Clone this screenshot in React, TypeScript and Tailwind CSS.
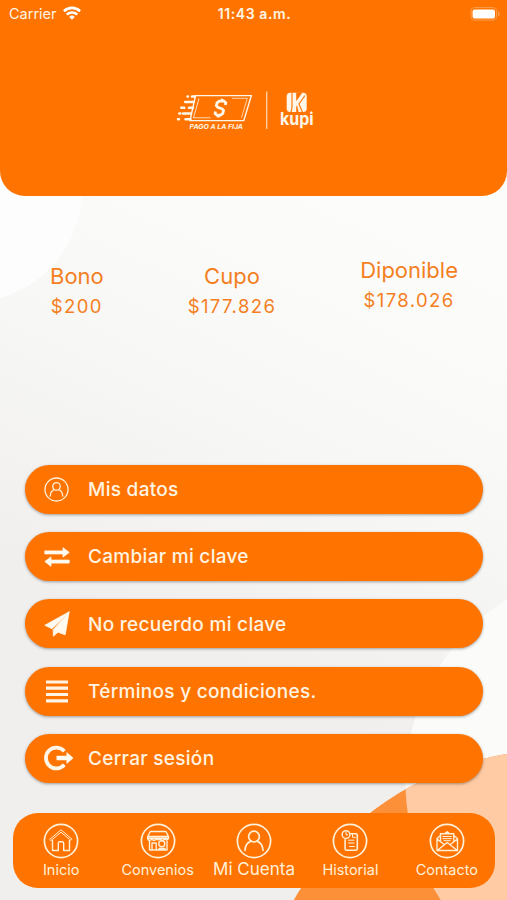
import React from 'react'

const balances = [
  { label: 'Bono', value: '$200', raised: false },
  { label: 'Cupo', value: '$177.826', raised: false },
  { label: 'Diponible', value: '$178.026', raised: true }
]

function Background() {
  return (
    <svg className="absolute inset-0" width="507" height="900" viewBox="0 0 507 900">
      <defs>
        <linearGradient id="bg" gradientUnits="userSpaceOnUse" x1="360" y1="220" x2="160" y2="640">
          <stop offset="0" stopColor="#fcfcfb" />
          <stop offset="0.5" stopColor="#f7f7f5" />
          <stop offset="0.85" stopColor="#f2f1f0" />
          <stop offset="1" stopColor="#f0efee" />
        </linearGradient>
        <clipPath id="bubble">
          <circle cx="620.5" cy="782" r="215" />
        </clipPath>
      </defs>
      <rect width="507" height="900" fill="url(#bg)" />
      <circle cx="-30" cy="190" r="112" fill="#fdfdfd" />
      <circle cx="620.5" cy="782" r="215" fill="#fbfbfa" />
      <circle cx="553" cy="1050" r="299.5" fill="#fc9039" />
      <circle cx="553" cy="1050" r="299.5" fill="#ffcba4" clipPath="url(#bubble)" />
    </svg>
  )
}

function StatusBar() {
  return (
    <div className="grid grid-cols-3 items-center h-7 pl-[9px] pr-[7px] text-[#fff4e6]">
      <div className="flex items-center gap-[6px]">
        <span className="text-[14.5px]">Carrier</span>
        <svg width="18" height="14" viewBox="0 0 18 14" fill="none" stroke="white" strokeWidth="2.7" className="-mt-[2px]">
          <path d="M.9 5.2a11.6 11.6 0 0 1 16.2 0" />
          <path d="M3.8 8.6a7.5 7.5 0 0 1 10.4 0" />
          <path d="M9 13.7 6.2 10.9a4 4 0 0 1 5.6 0Z" fill="white" stroke="none" />
        </svg>
      </div>
      <div className="-mt-[1px] text-center text-[14px] font-semibold tracking-[0.6px] whitespace-nowrap">11:43 a.m.</div>
      <div className="flex justify-end -mt-[1px]">
        <svg width="30" height="14" viewBox="0 0 30 14">
          <rect x="1.1" y="0.6" width="25.5" height="12.4" rx="3.5" fill="none" stroke="#ff9f50" strokeWidth="1" />
          <rect x="2.6" y="2.4" width="22.4" height="9" rx="2" fill="white" />
          <path d="M28 4.6v4.6c1.2-.4 1.7-1.2 1.7-2.3S29.2 5 28 4.6Z" fill="#ff9f50" />
        </svg>
      </div>
    </div>
  )
}

function Logo() {
  return (
    <svg width="150" height="50" viewBox="175 90 150 50" fill="none" stroke="#fff6ea" className="overflow-visible">
      <path d="M195.5 95.6H251.3L243.8 120.6H190Z" strokeWidth="1.4" />
      <path d="M232 98.3H247.3L241.5 117.6" strokeWidth="0.7" />
      <path d="M210.5 117.8H193.5L199 98.5" strokeWidth="0.8" />
      <path d="M192 96.5h3M185.2 102h8.5M189 107.8h4M183 113.6h8M185.5 119.2h5" strokeWidth="2.5" strokeLinecap="round" />
      <path d="M187.5 96.5h.5M181.3 107.8h3M179.3 113.6h1M178 119.2h1" strokeWidth="2.5" strokeLinecap="round" />
      <path d="M225.3 105l.5-2.3-1.8-1.6h-4.7l-2.3 1.8-.6 2.8 1.4 1.7 4.4 1.5 1.3 1.5-.7 3-2.2 1.8h-3.7l-1.8-1.6.4-2M222.4 98.8l-.6 2.2M218.6 115.3l-.5 2.2" strokeWidth="2.8" />
      <text x="189.5" y="128.6" fill="#fff6ea" stroke="none" textLength="53.5" lengthAdjust="spacingAndGlyphs" className="font-['Inter'] text-[6.5px] font-bold italic">
        PAGO A LA FIJA
      </text>
      <path d="M266.7 91.5v37.5" strokeWidth="1.3" stroke="#ffd2a6" />
      <rect x="286.7" y="92.8" width="20" height="19.2" rx="3.5" fill="#fff6ea" stroke="none" />
      <path d="M290.8 112.5 292 108V92.5M302.6 112.5l-3.6-8.5 6-8.5" stroke="#ff7400" strokeWidth="1.1" />
      <path d="M296.2 92.5h6.3l-6.3 8.7ZM296.2 106.5v6h2.6l-1.7-7Z" fill="#ff7400" stroke="none" />
      <text x="280" y="124.8" fill="#fff6ea" stroke="none" textLength="33.5" lengthAdjust="spacingAndGlyphs" className="font-['Inter'] text-[17px] font-bold">
        kupi
      </text>
    </svg>
  )
}

function PersonIcon({ size, stroke }: { size: number; stroke: number }) {
  return (
    <svg width={size} height={size} viewBox="0 0 36 36" fill="none" stroke="#fff0d9" strokeWidth={stroke} strokeLinecap="round">
      <circle cx="18" cy="18" r="16.6" />
      <circle cx="18" cy="13.6" r="5.4" />
      <path d="M9 27.5c.2-5.3 2.8-8.3 6-9.3M27 27.5c-.2-5.3-2.8-8.3-6-9.3" />
    </svg>
  )
}

const menu = [
  { label: 'Mis datos', icon: <PersonIcon size={25} stroke={1.9} /> },
  {
    label: 'Cambiar mi clave',
    icon: (
      <svg width="26" height="20" viewBox="0 0 26 20" fill="#fff9f0" stroke="#fff9f0" strokeWidth="0.8" strokeLinejoin="round">
        <path d="M.8 3.9H19V.7L25.2 5.4 19 10.1V6.9H.8ZM25.2 13.1H7V9.9L.8 14.6 7 19.3V16.1h18.2Z" />
      </svg>
    )
  },
  {
    label: 'No recuerdo mi clave',
    icon: (
      <svg width="26" height="26" viewBox="0 0 26 26" fill="#fff9f0" stroke="#fff9f0" strokeWidth="0.8" strokeLinejoin="round">
        <path d="M25.2.8.8 14.3l7.2 3.4ZM25.2.8 9.2 18.700l.2 6.500 4.500-4 7.300 2.600Z" />
      </svg>
    )
  },
  {
    label: 'Términos y condiciones.',
    icon: (
      <svg width="22" height="23" viewBox="0 0 22 23" stroke="#fff4e6" strokeWidth="3.2">
        <path d="M0 2h22M0 8.2h22M0 14.5h22M0 20.8h22" />
      </svg>
    )
  },
  {
    label: 'Cerrar sesión',
    icon: (
      <svg width="30" height="26" viewBox="0 0 30 26" fill="none" className="shrink-0 ml-1">
        <path d="M20.3 6.3A10.4 10.4 0 1 0 20.3 19.7" stroke="#fff6ea" strokeWidth="3.8" />
        <path d="M12.5 10.8H22.5V7L29.5 13 22.5 19V15.2H12.5Z" fill="#fff9f0" />
      </svg>
    )
  }
]

function NavIcon({ children }: { children: React.ReactNode }) {
  return (
    <svg width="36" height="36" viewBox="0 0 36 36" fill="none" stroke="#fff0d9" strokeWidth="1.4" strokeLinejoin="round" strokeLinecap="round">
      <circle cx="18" cy="18" r="16.6" strokeWidth="1.7" />
      {children}
    </svg>
  )
}

const tabs = [
  {
    label: 'Inicio',
    icon: (
      <NavIcon>
        <path d="M7 16.2 18 6.8l11 9.4-1.2 1.2L18 9.2l-9.8 8.2Z" strokeWidth="1" />
        <path d="M9.5 17.5v10h5.8v-7.3q0-1.5 1.5-1.5h2.4q1.5 0 1.5 1.5v7.3h5.8v-10" />
      </NavIcon>
    )
  },
  {
    label: 'Convenios',
    icon: (
      <NavIcon>
        <path d="M10.3 8.5h15.6l2.6 5v1.7H7.7v-1.7ZM7.7 13.5h20.8" />
        <path d="M7.7 15.2a2.1 2.1 0 0 0 4.2 0 2.1 2.1 0 0 0 4.2 0 2.1 2.1 0 0 0 4.1 0 2.1 2.1 0 0 0 4.2 0 2.1 2.1 0 0 0 4.1 0" />
        <path d="M9.5 18v9h17.5v-9M12 27v-7h4.2v7M19 27v-1.5h6" />
        <circle cx="21.8" cy="20.8" r="3" />
      </NavIcon>
    )
  },
  { label: 'Mi Cuenta', active: true, icon: <PersonIcon size={36} stroke={1.7} /> },
  {
    label: 'Historial',
    icon: (
      <NavIcon>
        <circle cx="14" cy="11.6" r="3.9" />
        <path d="M14 9.2v2.6h1.8" strokeWidth="1" />
        <path d="M18.8 10.8h5q1.5 0 1.5 1.5v13.4q0 1.5-1.5 1.5h-9.2q-1.5 0-1.5-1.5v-9" strokeWidth="1.6" />
        <path d="M20.5 11.5v2.8h3M16.5 17.2h5.5M16.5 20h5.5M17.5 23.5h5" strokeWidth="1" />
      </NavIcon>
    )
  },
  {
    label: 'Contacto',
    icon: (
      <NavIcon>
        <path d="M8 15.5v12h20.5v-12l-3.5-2.8M8 15.5l3.3-2.8M8 16l7.3 5.5M28.5 16l-7.3 5.5M8.5 27.2l9.7-7.7 9.8 7.7" />
        <path d="M11.5 18.5v-7.8h13.3v7.8M15.5 10.7l2.6-2 2.8 2" />
        <path d="M13.8 13.5h8.6M13.8 15.6h8.6M15 17.7h6.2" strokeWidth="1" />
      </NavIcon>
    )
  }
]

export default function App() {
  return (
    <div className="relative w-[507px] h-[900px] overflow-hidden bg-[#f4f3f2] font-['Inter',sans-serif]">
      <Background />
      <div className="relative flex flex-col h-full">
        <header className="h-[196px] shrink-0 rounded-b-[25px] bg-[#ff7400]">
          <StatusBar />
          <div className="flex pl-[175px] pt-[62px]">
            <Logo />
          </div>
        </header>

        <section className="flex justify-between h-[269px] shrink-0 pl-[50px] pr-[49px] pt-[63px] text-[#f47f1f]">
          {balances.map(b => (
            <div key={b.label} className={b.raised ? 'text-center' : 'text-center pt-[6px]'}>
              <div className="text-[22px] leading-[22px]">{b.label}</div>
              <div className="mt-[9px] text-[18.5px] leading-[20px] tracking-[1.4px]">{b.value}</div>
            </div>
          ))}
        </section>

        <div className="flex flex-col gap-[18.2px] pl-[25px] pr-[24px]">
          {menu.map(item => (
            <button
              key={item.label}
              className="flex items-center h-[49px] shrink-0 rounded-full bg-[#ff7400] shadow-[0_1px_3px_rgba(0,0,0,0.35)] text-left"
            >
              <span className="flex justify-center w-[63px] shrink-0">{item.icon}</span>
              <span className="pt-[2px] text-[19px] font-medium tracking-[0.3px] text-[#fff3e2]">{item.label}</span>
            </button>
          ))}
        </div>

        <nav className="flex items-start h-[75px] mt-auto mb-[12px] ml-[13px] mr-[12px] rounded-[25px] bg-[#ff7400] text-[#fff0d9]">
          {tabs.map(tab => (
            <div key={tab.label} className="flex flex-col items-center flex-1 pt-[10px]">
              {tab.icon}
              <span
                className={
                  tab.active
                    ? 'text-[17px] leading-[20px] whitespace-nowrap'
                    : 'pt-[1px] text-[14.5px] leading-[20px] whitespace-nowrap'
                }
              >
                {tab.label}
              </span>
            </div>
          ))}
        </nav>
      </div>
    </div>
  )
}
